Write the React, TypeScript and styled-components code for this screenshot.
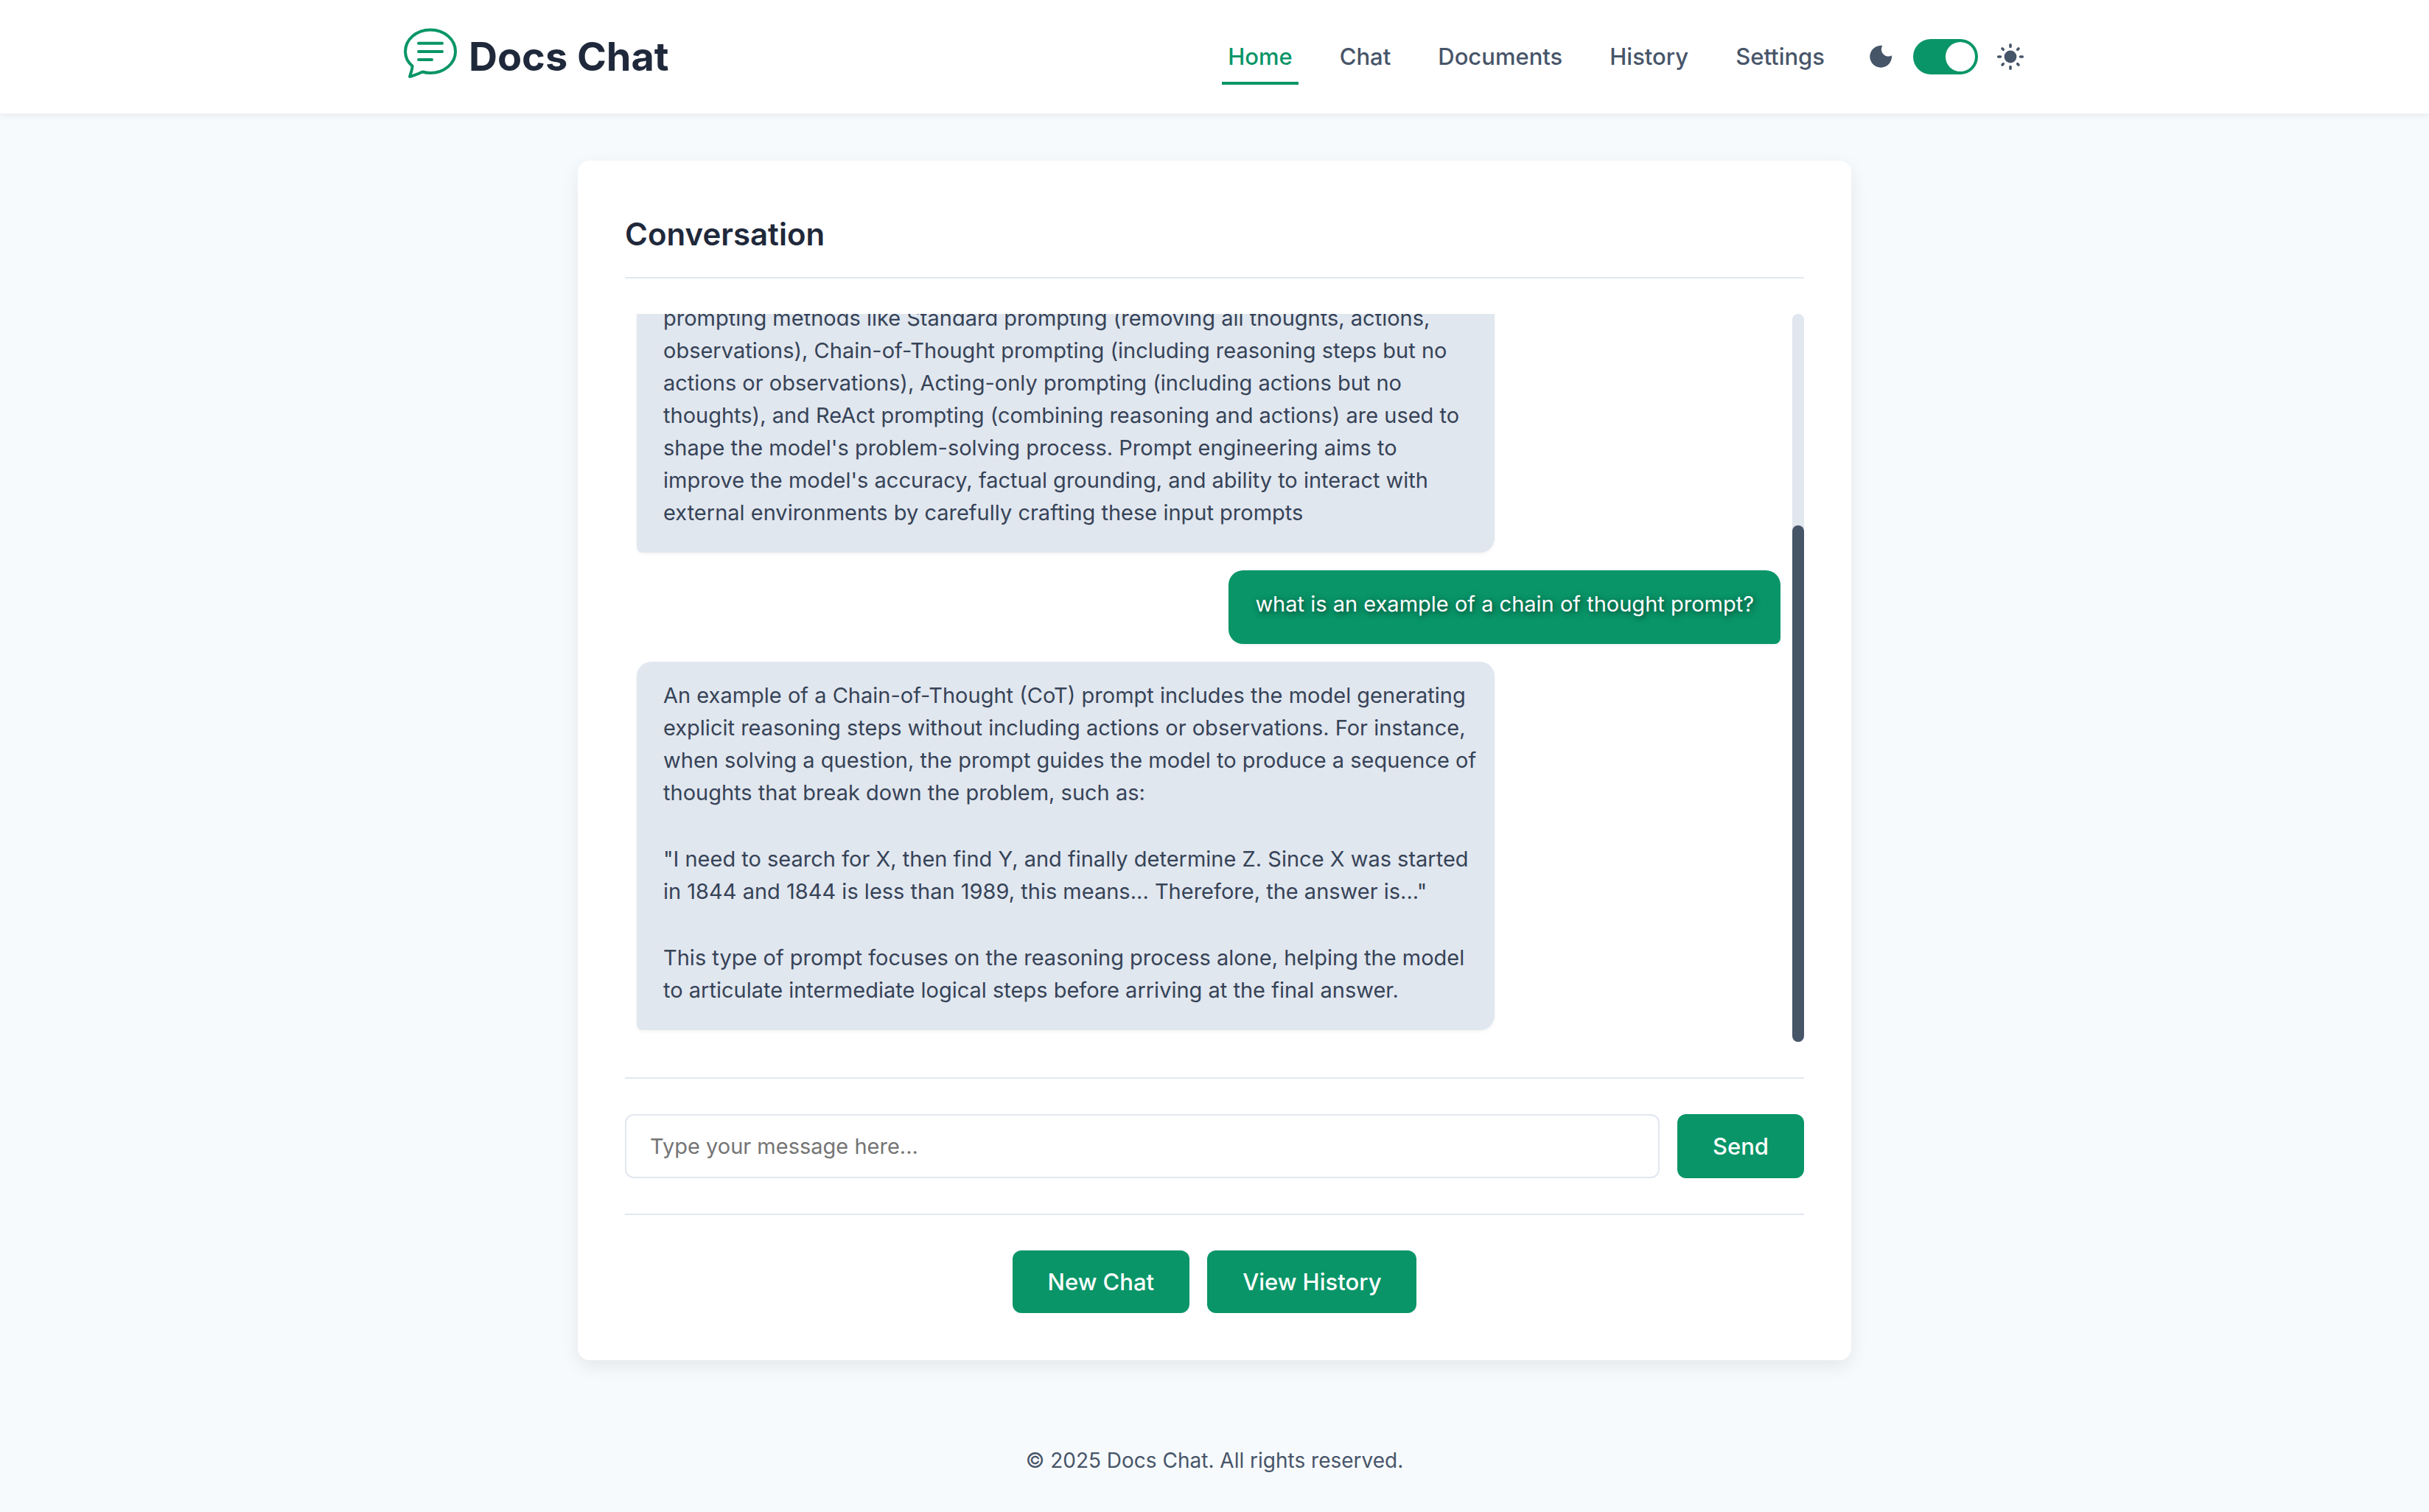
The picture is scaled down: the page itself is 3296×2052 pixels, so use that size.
import React from "react";
import styled, { createGlobalStyle } from "styled-components";

const c = {
  page: "#f7fafd",
  surface: "#ffffff",
  accent: "#099568",
  heading: "#1f293b",
  text: "#364357",
  muted: "#475569",
  line: "#e1e7f0",
  bubble: "#e1e7ef",
  placeholder: "#757575",
};

const GlobalStyle = createGlobalStyle`
  *, *::before, *::after { box-sizing: border-box; }
  body {
    margin: 0;
    background: ${c.page};
    color: ${c.text};
    font-family: Inter, "Liberation Sans", sans-serif;
    font-size: 29px;
    line-height: 44px;
    -webkit-font-smoothing: antialiased;
  }
  h1, h2, p { margin: 0; }
`;

const Page = styled.div`
  min-height: 100vh;
  display: flex;
  flex-direction: column;
`;

const Header = styled.header`
  background: ${c.surface};
  box-shadow: 0 4px 8px rgba(0, 0, 0, 0.05);
`;

const HeaderInner = styled.div`
  display: flex;
  align-items: center;
  justify-content: space-between;
  max-width: 2200px;
  margin: 0 auto;
  padding: 38px 0;
`;

const Brand = styled.div`
  display: flex;
  align-items: center;
  gap: 16px;
  color: ${c.accent};
  svg { display: block; }
`;

const BrandName = styled.h1`
  color: ${c.heading};
  font-size: 54px;
  font-weight: 700;
  line-height: 78px;
`;

const HeaderRight = styled.div`
  display: flex;
  align-items: center;
  gap: 48px;
`;

const Nav = styled.nav`
  display: flex;
  align-items: center;
  gap: 48px;
`;

const NavLink = styled.a<{ $active?: boolean }>`
  padding: 8px;
  border: solid transparent;
  border-width: 4px 0;
  border-bottom-color: ${(p) => (p.$active ? c.accent : "transparent")};
  color: ${(p) => (p.$active ? c.accent : c.muted)};
  font-size: 31px;
  font-weight: 500;
  line-height: 52px;
  text-decoration: none;
`;

const ThemeControl = styled.label`
  display: flex;
  align-items: center;
  gap: 24px;
  color: ${c.muted};
  svg { display: block; }
`;

const Switch = styled.input`
  appearance: none;
  display: flex;
  justify-content: flex-start;
  width: 88px;
  height: 48px;
  margin: 0;
  padding: 4px;
  border-radius: 24px;
  background: ${c.muted};
  cursor: pointer;
  &::before {
    content: "";
    width: 40px;
    height: 40px;
    border-radius: 50%;
    background: ${c.surface};
  }
  &:checked {
    justify-content: flex-end;
    background: ${c.accent};
  }
`;

const Main = styled.main`
  flex: 1;
  padding: 64px;
`;

const Card = styled.section`
  max-width: 1728px;
  margin: 0 auto;
  padding: 64px;
  border-radius: 16px;
  background: ${c.surface};
  box-shadow: 0 8px 24px rgba(0, 0, 0, 0.08);
`;

const CardTitle = styled.h2`
  padding-bottom: 22px;
  border-bottom: 2px solid ${c.line};
  color: ${c.heading};
  font-size: 42px;
  font-weight: 600;
  line-height: 72px;
`;

const ChatArea = styled.div`
  display: flex;
  height: calc(100vh - 1064px);
  min-height: 480px;
  margin: 48px 0;
`;

const Messages = styled.div`
  flex: 1;
  min-width: 0;
  display: flex;
  flex-direction: column;
  justify-content: flex-end;
  gap: 24px;
  padding: 16px;
  overflow: hidden;
`;

const Bubble = styled.div<{ $own?: boolean }>`
  flex: none;
  display: flex;
  flex-direction: column;
  gap: 46px;
  align-self: ${(p) => (p.$own ? "flex-end" : "flex-start")};
  max-width: 75%;
  padding: ${(p) => (p.$own ? "24px 36px 32px" : "24px 20px 32px 36px")};
  border-radius: ${(p) => (p.$own ? "20px 20px 8px 20px" : "20px 20px 20px 8px")};
  background: ${(p) => (p.$own ? c.accent : c.bubble)};
  color: ${(p) => (p.$own ? c.surface : c.text)};
  text-shadow: ${(p) => (p.$own ? "2px 2px 8px rgba(0, 0, 0, 0.6)" : "none")};
  box-shadow: 0 2px 4px rgba(0, 0, 0, 0.05);
`;

const ScrollTrack = styled.div`
  flex: none;
  display: flex;
  flex-direction: column;
  justify-content: flex-end;
  width: 16px;
  border-radius: 8px;
  background: ${c.bubble};
`;

const ScrollThumb = styled.div`
  height: 71%;
  border-radius: 8px;
  background: ${c.muted};
`;

const Composer = styled.form`
  display: flex;
  gap: 24px;
  padding: 48px 0;
  border: solid ${c.line};
  border-width: 2px 0;
`;

const MessageInput = styled.input`
  flex: 1;
  min-width: 0;
  height: 87px;
  padding: 0 32px;
  border: 2px solid ${c.line};
  border-radius: 12px;
  background: ${c.surface};
  color: ${c.text};
  font: inherit;
  &::placeholder { color: ${c.placeholder}; opacity: 1; }
`;

const Button = styled.button`
  padding: 20px 48px;
  border: 0;
  border-radius: 12px;
  background: ${c.accent};
  color: ${c.surface};
  font: inherit;
  font-size: 31px;
  font-weight: 500;
  line-height: 45px;
  cursor: pointer;
`;

const Actions = styled.div`
  display: flex;
  justify-content: center;
  gap: 24px;
  padding-top: 48px;
`;

const Footer = styled.footer`
  padding: 48px;
  color: ${c.muted};
  font-size: 28px;
  text-align: center;
`;

const LogoIcon = () => (
  <svg width="72" height="78" viewBox="0 0 72 78" fill="none" stroke="currentColor" strokeWidth="4" strokeLinecap="round" strokeLinejoin="round" aria-hidden="true">
    <path d="M25.3 59.5C29 60.6 32.5 61 36 61C55 61 70 48 70 32C70 15.5 55 2.5 36 2.5C17 2.5 2 15.5 2 32C2 39.5 5.5 46.5 11.5 51.5C11.5 57 9 62 8 66C14 64.5 20 62 25.3 59.5Z" />
    <path d="M20 20.7H52M20 32H52M20 43H38" />
  </svg>
);

const MoonIcon = () => (
  <svg width="40" height="40" viewBox="0 0 40 40" fill="currentColor" aria-hidden="true">
    <path d="M22.3 5A14.9 14.9 0 1 0 35 18.3A9.5 9.5 0 0 1 22.3 5Z" />
  </svg>
);

const SunIcon = () => (
  <svg width="40" height="40" viewBox="0 0 40 40" fill="none" stroke="currentColor" strokeWidth="3.6" strokeLinecap="round" aria-hidden="true">
    <circle cx="20" cy="20" r="8.4" fill="currentColor" stroke="none" />
    <path d="M20 3.7V6.5M20 33.5V36.3M3.7 20H6.5M33.5 20H36.3M9 9L10.3 10.3M29.7 29.7L31 31M9 31L10.3 29.7M29.7 10.3L31 9" />
  </svg>
);

const links = ["Home", "Chat", "Documents", "History", "Settings"];

const messages = [
  {
    own: false,
    paragraphs: [
      "prompting methods like Standard prompting (removing all thoughts, actions, observations), Chain-of-Thought prompting (including reasoning steps but no actions or observations), Acting-only prompting (including actions but no thoughts), and ReAct prompting (combining reasoning and actions) are used to shape the model's problem-solving process. Prompt engineering aims to improve the model's accuracy, factual grounding, and ability to interact with external environments by carefully crafting these input prompts",
    ],
  },
  { own: true, paragraphs: ["what is an example of a chain of thought prompt?"] },
  {
    own: false,
    paragraphs: [
      "An example of a Chain-of-Thought (CoT) prompt includes the model generating explicit reasoning steps without including actions or observations. For instance, when solving a question, the prompt guides the model to produce a sequence of thoughts that break down the problem, such as:",
      '"I need to search for X, then find Y, and finally determine Z. Since X was started in 1844 and 1844 is less than 1989, this means... Therefore, the answer is..."',
      "This type of prompt focuses on the reasoning process alone, helping the model to articulate intermediate logical steps before arriving at the final answer.",
    ],
  },
];

export default function App() {
  return (
    <Page>
      <GlobalStyle />
      <Header>
        <HeaderInner>
          <Brand>
            <LogoIcon />
            <BrandName>Docs Chat</BrandName>
          </Brand>
          <HeaderRight>
            <Nav>
              {links.map((name, i) => (
                <NavLink key={name} href={`#${name.toLowerCase()}`} $active={i === 0}>
                  {name}
                </NavLink>
              ))}
            </Nav>
            <ThemeControl>
              <MoonIcon />
              <Switch type="checkbox" aria-label="Light theme" defaultChecked />
              <SunIcon />
            </ThemeControl>
          </HeaderRight>
        </HeaderInner>
      </Header>
      <Main>
        <Card>
          <CardTitle>Conversation</CardTitle>
          <ChatArea>
            <Messages>
              {messages.map((message, i) => (
                <Bubble key={i} $own={message.own}>
                  {message.paragraphs.map((text) => (
                    <p key={text}>{text}</p>
                  ))}
                </Bubble>
              ))}
            </Messages>
            <ScrollTrack>
              <ScrollThumb />
            </ScrollTrack>
          </ChatArea>
          <Composer onSubmit={(e) => e.preventDefault()}>
            <MessageInput type="text" aria-label="Message" placeholder="Type your message here..." />
            <Button type="submit">Send</Button>
          </Composer>
          <Actions>
            <Button type="button">New Chat</Button>
            <Button type="button">View History</Button>
          </Actions>
        </Card>
      </Main>
      <Footer>© 2025 Docs Chat. All rights reserved.</Footer>
    </Page>
  );
}
